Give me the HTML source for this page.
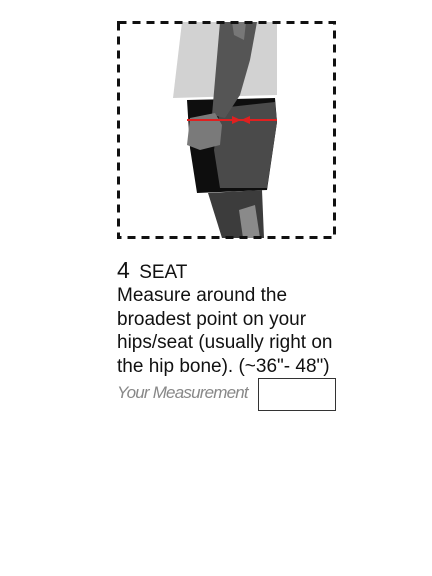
<!DOCTYPE html>
<html><head><style>
body{margin:0;width:432px;height:576px;background:#fff;position:relative;overflow:hidden;font-family:"Liberation Sans",sans-serif;}
.t{position:absolute;left:117px;color:#111;}
</style></head><body>
<svg width="432" height="576" style="position:absolute;left:0;top:0">
<polygon points="182,22 277,22 277,95 173,98" fill="#d2d2d2"/>
<polygon points="187,100 275,98 277,122 267,190 197,193 190,148" fill="#0e0e0e"/>
<polygon points="220,108 275,102 277,122 267,188 220,188 214,150" fill="#4a4a4a"/>
<polygon points="208,193 262,190 264,238 222,238" fill="#3c3c3c"/>
<polygon points="239,210 255,205 260,238 243,238" fill="#8a8a8a"/>
<polygon points="220,22 257,22 250,60 240,95 225,118 212,115" fill="#555"/>
<polygon points="232,22 246,22 244,40 234,35" fill="#777"/>
<polygon points="190,118 215,113 222,125 220,145 200,150 187,145" fill="#7a7a7a"/>
<line x1="187" y1="120" x2="277" y2="120" stroke="#e02020" stroke-width="2"/>
<polygon points="241,120 232,116 232,124" fill="#e02020"/>
<polygon points="241,120 250,116 250,124" fill="#e02020"/>
<rect x="118.5" y="22.5" width="216" height="215" fill="none" stroke="#111" stroke-width="3" stroke-dasharray="8,6"/>
<rect x="258.5" y="378.5" width="77" height="32" fill="none" stroke="#333" stroke-width="1"/>
</svg>
<div class="t" style="top:257px;font-size:23px;">4 <span style="font-size:19px;margin-left:3px">SEAT</span></div>
<div class="t" style="top:284px;font-size:19px;line-height:23.5px;width:240px;">Measure around the<br>broadest point on your<br>hips/seat (usually right on<br>the hip bone). (~36"- 48")</div>
<div class="t" style="top:383px;font-size:17px;font-style:italic;color:#888;letter-spacing:-0.8px">Your Measurement</div>
</body></html>
